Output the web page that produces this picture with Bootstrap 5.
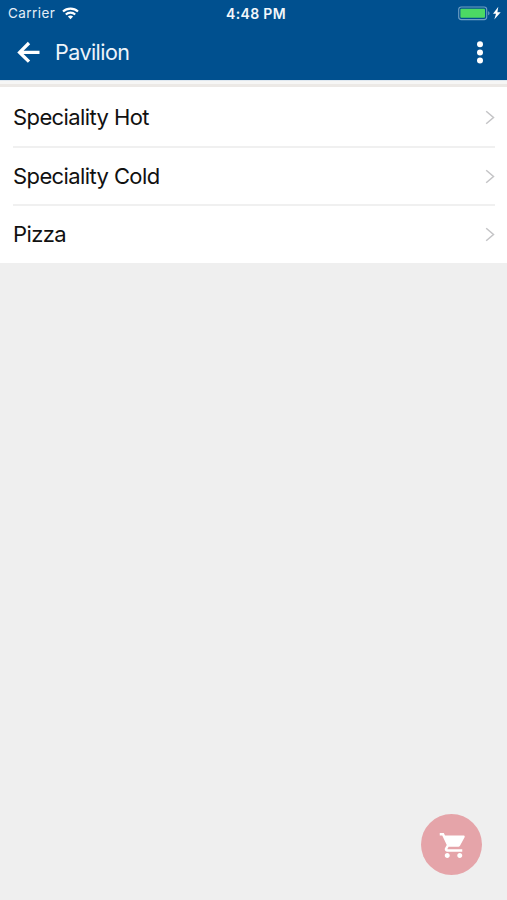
<!DOCTYPE html>
<html lang="en">
<head>
<meta charset="utf-8">
<meta name="viewport" content="width=device-width, initial-scale=1">
<title>Pavilion</title>
<link href="https://cdn.jsdelivr.net/npm/bootstrap@5.3.0/dist/css/bootstrap.min.css" rel="stylesheet">
<style>
  body { font-family: Inter, "Liberation Sans", sans-serif; background: #efefef; color: #111; }
  svg { display: block; flex: none; }
  .app-header { background: #00508f; height: 80px; color: #fff; }
  .status-bar { height: 27px; padding: 0 5px 0 8px; font-size: 13.5px; line-height: 27px; color: #e4eef7; }
  .carrier { letter-spacing: .42px; width: 54px; }
  .clock { font-size: 14px; font-weight: 600; letter-spacing: .35px; color: #f2f7fb; padding-left: 2px; }
  .title-bar { height: 51px; padding: 0 20px 0 16px; }
  .screen-title { font-size: 21.5px; line-height: 51px; letter-spacing: -.55px; color: #eef4fa; margin-left: 14px; }
  .header-gap { height: 7.4px; background: linear-gradient(#dfe8f0 0 1px, #f6f6f5 1px 4px, #ece9e6 4px); }
  .menu-list { background: #fff; }
  .menu-item { height: 58.5px; margin: 0 12px 0 13px; font-size: 22px; letter-spacing: -.6px; padding-top: 1px; color: #111; text-decoration: none; }
  .menu-item + .menu-item { border-top: 2px solid #f0f0f0; padding-top: 0; }
  .cart-btn { width: 61px; height: 61px; right: 25px; bottom: 25px; background: #e5a4a9; }
</style>
<script src="https://cdn.jsdelivr.net/npm/bootstrap@5.3.0/dist/js/bootstrap.bundle.min.js"></script>
</head>
<body class="vh-100 overflow-hidden">
<header class="app-header">
  <div class="status-bar row g-0 align-items-center">
    <div class="col d-flex align-items-center">
      <span class="carrier">Carrier</span>
      <svg width="17" height="13" viewBox="0 0 17 13" fill="none" stroke="#fff" stroke-width="2.1">
        <path d="M1 4.6C5.1.6 11.9.6 16 4.6M3.8 7.5c2.6-2.5 6.8-2.5 9.4 0"/><path d="M5.9 9.5c1.5-1.3 3.7-1.3 5.2 0L8.5 12.3z" fill="#fff" stroke="none"/>
      </svg>
    </div>
    <div class="col-auto clock">4:48 PM</div>
    <div class="col d-flex align-items-center justify-content-end">
      <svg width="44" height="15" viewBox="0 0 44 15">
        <rect x=".7" y="1" width="28" height="12.6" rx="2.6" fill="none" stroke="#6f9fc4" stroke-width="1.1"/>
        <rect x="2.4" y="2.8" width="24.6" height="9" rx="1" fill="#4cd964"/>
        <path d="M30.2 5.3c1.7.4 1.7 3.6 0 4z" fill="#6f9fc4"/>
        <path d="M40.3.8l-5.3 7h3l-1.7 5.8 6.4-7.3h-3.3z" fill="#fff"/>
      </svg>
    </div>
  </div>
  <div class="title-bar d-flex align-items-center">
    <svg width="25" height="24" viewBox="0 0 25 24" fill="none" stroke="#fff" stroke-width="3.3"><path d="M13 2L3.6 11.4l9.4 9.3M3.6 11.4H23.5"/></svg>
    <h1 class="screen-title mb-0 fw-normal">Pavilion</h1>
    <svg class="ms-auto" width="14" height="24" viewBox="0 0 14 24" fill="#fff"><circle cx="7" cy="3.2" r="3"/><circle cx="7" cy="11.4" r="3"/><circle cx="7" cy="19.6" r="3"/></svg>
  </div>
</header>
<div class="header-gap"></div>
<main class="menu-list">
  <a class="menu-item d-flex align-items-center justify-content-between" href="#">Speciality Hot
    <svg width="10" height="15" viewBox="0 0 10 15" fill="none" stroke="#c4c4c6" stroke-width="1.5"><path d="M1.2 1.2l7.3 6.3-7.3 6.3"/></svg></a>
  <a class="menu-item d-flex align-items-center justify-content-between" href="#">Speciality Cold
    <svg width="10" height="15" viewBox="0 0 10 15" fill="none" stroke="#c4c4c6" stroke-width="1.5"><path d="M1.2 1.2l7.3 6.3-7.3 6.3"/></svg></a>
  <a class="menu-item d-flex align-items-center justify-content-between" href="#">Pizza
    <svg width="10" height="15" viewBox="0 0 10 15" fill="none" stroke="#c4c4c6" stroke-width="1.5"><path d="M1.2 1.2l7.3 6.3-7.3 6.3"/></svg></a>
</main>
<button class="cart-btn btn rounded-circle border-0 p-0 position-fixed d-flex align-items-center justify-content-center" type="button" aria-label="Cart">
  <svg width="30" height="30" viewBox="-1.2 -.4 24 24" fill="#fff"><path d="M7 18c-1.1 0-1.99.9-1.99 2S5.9 22 7 22s2-.9 2-2-.9-2-2-2zM1 2v2h2l3.6 7.59-1.35 2.45c-.16.28-.25.61-.25.96 0 1.1.9 2 2 2h12v-2H7.42c-.14 0-.25-.11-.25-.25l.03-.12.9-1.63h7.45c.75 0 1.41-.41 1.75-1.03l3.58-6.49c.08-.14.12-.31.12-.48 0-.55-.45-1-1-1H5.21l-.94-2H1zm16 16c-1.1 0-1.99.9-1.99 2s.89 2 1.99 2 2-.9 2-2-.9-2-2-2z"/></svg>
</button>
</body>
</html>
